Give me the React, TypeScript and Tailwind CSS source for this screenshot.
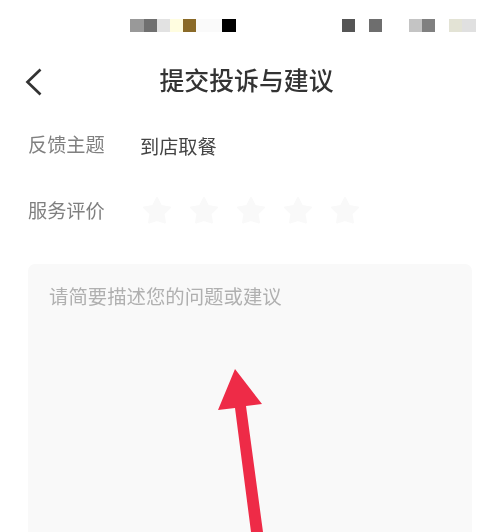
const cjk = "font-['Noto_Sans_CJK_SC','Noto_Sans',sans-serif]";

function Star() {
  return (
    <svg width="30" height="29" viewBox="0 0 30 29" className="shrink-0 blur-[0.6px]">
      <path
        d="M15 2 L19 10 L28 11.5 L21.5 17.7 L23 26.5 L15 24 L7 26.5 L8.5 17.7 L2 11.5 L11 10 Z"
        fill="#f9f9f9"
        stroke="#f9f9f9"
        strokeWidth="2"
        strokeLinejoin="round"
      />
    </svg>
  );
}

export default function App() {
  return (
    <div className={`relative h-[532px] w-[480px] overflow-hidden bg-white ${cjk}`}>
      {/* Blurred status bar */}
      <div className="flex h-[51px] items-start justify-between pl-[130px] pr-1 pt-[19px] blur-[0.4px]">
        <div className="flex h-[13px]">
          <div className="w-[14px] bg-[#999999]" />
          <div className="w-[13px] bg-[#707070]" />
          <div className="w-[13px] bg-[#e2e2e2]" />
          <div className="w-[13px] bg-[#fffde0]" />
          <div className="w-[13px] bg-[#8a6a28]" />
          <div className="w-[26px] bg-[#fafafa]" />
          <div className="w-[14px] bg-black" />
        </div>
        <div className="flex h-[13px]">
          <div className="w-[13px] bg-[#555555]" />
          <div className="ml-[14px] w-[13px] bg-[#6e6e6e]" />
          <div className="ml-[27px] w-[13px] bg-[#c4c4c4]" />
          <div className="w-[13px] bg-[#808080]" />
          <div className="ml-[14px] w-[13px] bg-[#e3e3d5]" />
          <div className="w-[14px] bg-[#e0e0e0]" />
        </div>
      </div>

      {/* Header */}
      <header className="relative flex h-[60px] items-center justify-center blur-[0.3px]">
        <svg width="18" height="28" viewBox="0 0 18 28" fill="none" className="absolute left-[25px] top-[17px]">
          <path d="M15.5 1.5 L2.5 14 L15.5 26.5" stroke="#333333" strokeWidth="2.7" />
        </svg>
        <h1 className="mb-[3px] ml-[13px] text-[24.9px] font-medium leading-none text-[#333333]">提交投诉与建议</h1>
      </header>

      {/* Form rows */}
      <div className="flex flex-col pl-[28px] blur-[0.3px]">
        <div className="mt-[21px] flex h-[26px] items-center">
          <span className="w-[112px] text-[19.2px] leading-none text-[#808080]">反馈主题</span>
          <span className="mt-[3px] text-[19.2px] leading-none text-[#444444]">到店取餐</span>
        </div>
        <div className="mt-[38px] flex h-[28px] items-center">
          <span className="mt-[2px] w-[113px] text-[19.2px] leading-none text-[#808080]">服务评价</span>
          <div className="flex gap-[17px] pl-[1px]">
            <Star />
            <Star />
            <Star />
            <Star />
            <Star />
          </div>
        </div>
      </div>

      {/* Textarea */}
      <div className="ml-[28px] mr-[8px] mt-[40px] h-[300px] rounded-t-[7px] bg-[#f9f9f9] pl-[21px] pr-[22px] pt-[22px] blur-[0.3px]">
        <p className="text-[19.4px] leading-5 text-[#b0b0b0]">请简要描述您的问题或建议</p>
      </div>

      {/* Annotation arrow */}
      <svg width="480" height="532" viewBox="0 0 480 532" className="pointer-events-none absolute left-0 top-0">
        <path d="M235 369 L262 404 L246 406 L263 532 L251 532 L235 408 L218 410 Z" fill="#ee2b47" />
      </svg>
    </div>
  );
}
